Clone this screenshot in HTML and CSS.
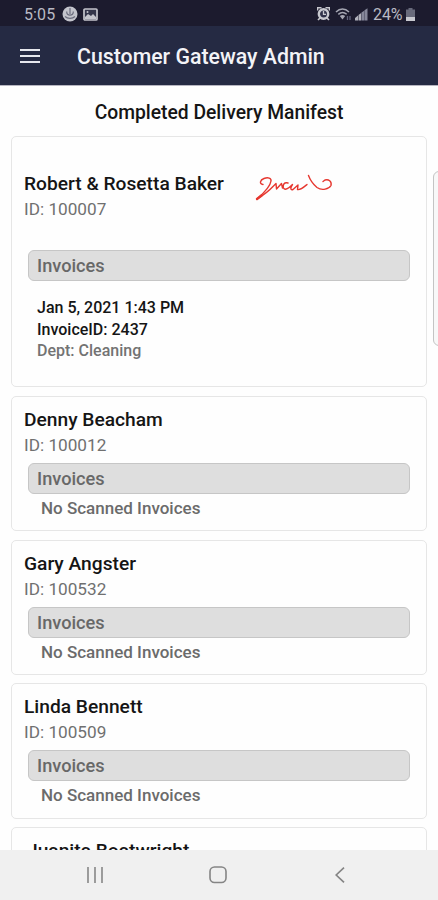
FILE: index.html
```html
<!DOCTYPE html>
<html lang="en">
<head>
<meta charset="utf-8">
<title>Customer Gateway Admin</title>
<link rel="stylesheet" href="styles.css">
</head>
<body>
<div class="status">
  <span class="clock">5:05</span>
  <svg class="st-sync" width="16" height="16" viewBox="0 0 16 16"><circle cx="8" cy="8" r="7.500" fill="#c3c4cc"/><path d="M8 2v6M4.700 5.500C4.500 8 6 9.200 8 9.200s3.500-1.200 3.300-3.700M3 10.500c2.500 2.500 7.500 2.500 10 0" fill="none" stroke="#6b6d7e" stroke-width="1.200"/></svg>
  <svg class="st-image" width="15" height="13" viewBox="0 0 15 13"><rect x="1" y="1" width="13" height="11" rx="1" fill="#33354a" stroke="#c3c4cc" stroke-width="1.700"/><path d="M2 11V9l3-3 3 2 2-2 3 3v2z" fill="#c3c4cc"/><circle cx="4.500" cy="4" r="1" fill="#c3c4cc"/></svg>
  <span class="spacer"></span>
  <svg class="st-alarm" width="13" height="14" viewBox="0 0 13 14"><path d="M.5 3.500V.7h4M12.500 3.500V.7h-4M1 13l2-2M12 13l-2-2" fill="none" stroke="#c8c9d0" stroke-width="1.700"/><circle cx="6.500" cy="7" r="4.700" fill="#30324a" stroke="#c8c9d0" stroke-width="2.400"/><path d="M6.500 4v3.300H9" fill="none" stroke="#c8c9d0" stroke-width="1.300"/></svg>
  <svg class="st-wifi" width="17" height="13" viewBox="0 0 17 13"><path d="M1 4c4-4 9-4 13 0M3.300 6.300c3-2.500 5.500-2.500 8.400 0" fill="none" stroke="#a5a6b2" stroke-width="1.500"/><path d="M4.800 8c2-1.500 3.500-1.500 5.400 0L7.500 11.500z" fill="#a5a6b2"/><path d="M12.500 8v4M15 8v4" stroke="#60627a" stroke-width="1.300"/></svg>
  <svg class="st-signal" width="13" height="13" viewBox="0 0 13 13"><path d="M0 12.500v-2.500l3-2.500v5zM3.500 12.500V7l2.700-2v7.500z" fill="#b0b1bb"/><path d="M6.500 12.500V4.500L9.200 2.800v9.700zM9.500 12.500V2.200L12.500.3v12.200z" fill="#85879a"/></svg>
  <span class="percent">24%</span>
  <svg class="st-battery" width="9" height="13" viewBox="0 0 9 13"><path d="M2.500 0h4v1.500H9V9H0V1.500h2.500z" fill="#686a7b"/><path d="M0 9h9v4H0z" fill="#c8c9d0"/></svg>
</div>
<header class="appbar">
  <svg width="20" height="14" viewBox="0 0 20 14"><path d="M0 1h20M0 7h20M0 13h20" stroke="#e6e7ed" stroke-width="1.800"/></svg>
  <h1>Customer Gateway Admin</h1>
</header>
<main class="content">
  <h2>Completed Delivery Manifest</h2>
  <section class="card card-tall">
    <div class="person">
      <div><h3>Robert &amp; Rosetta Baker</h3><p class="id">ID: 100007</p></div>
      <svg class="signature" width="80" height="30" viewBox="0 0 80 30" fill="none" stroke="#e6372f" stroke-width="1.400" stroke-linecap="round" stroke-linejoin="round"><path d="M8 13.500C4 13 5 9 9 7.500C13 6 16.500 7 16 10C15.500 14 10 21 2 28"/><path d="M2 28C7 25 12 22 18 15.500L21 12.500L21.500 18L26.500 12.500L27.500 17M33 12C29 11 27.500 14 28.500 17C30 20 34 17 37.500 13.500C35 17 35.500 19.500 38 18.500L43 14L42.500 18.500C45 19.500 49 16 52 13.500"/><path d="M2 28l4.500-3.500" stroke-width="2.400"/><path d="M53.500 4.500C55 8.500 59 14 62 16.500C67 20 74 18 76 14.500C77 10 73.500 8 70 9L68 10.500"/></svg>
    </div>
    <div class="bar">Invoices</div>
    <div class="invoice"><p>Jan 5, 2021 1:43 PM</p><p>InvoiceID: 2437</p><p class="dept">Dept: Cleaning</p></div>
  </section>
  <section class="card">
    <h3>Denny Beacham</h3><p class="id">ID: 100012</p>
    <div class="bar">Invoices</div><p class="none">No Scanned Invoices</p>
  </section>
  <section class="card">
    <h3>Gary Angster</h3><p class="id">ID: 100532</p>
    <div class="bar">Invoices</div><p class="none">No Scanned Invoices</p>
  </section>
  <section class="card">
    <h3>Linda Bennett</h3><p class="id">ID: 100509</p>
    <div class="bar">Invoices</div><p class="none">No Scanned Invoices</p>
  </section>
  <section class="card card-last">
    <h3>Juanita Boatwright</h3>
  </section>
  <div class="edge-handle"></div>
</main>
<nav class="navbar">
  <svg width="16" height="16" viewBox="0 0 16 16"><path d="M1 0v16M8 0v16M15 0v16" stroke="#8d8d8d" stroke-width="1.700"/></svg>
  <svg class="home" width="18" height="18" viewBox="0 0 18 18"><rect x="1" y="1" width="16" height="15.500" rx="4.500" fill="none" stroke="#858585" stroke-width="1.600"/></svg>
  <svg width="10" height="16" viewBox="0 0 10 16"><path d="M9 .7L1.200 8L9 15.300" fill="none" stroke="#858585" stroke-width="1.700"/></svg>
</nav>
</body>
</html>
```
FILE: styles.css
```css
* { box-sizing: border-box; }
body {
  margin: 0;
  width: 438px;
  height: 900px;
  overflow: hidden;
  display: flex;
  flex-direction: column;
  background: #fefefe;
  font-family: Roboto, "Liberation Sans", sans-serif;
  color: #151515;
}
h1, h2, h3, p { margin: 0; font-weight: 500; white-space: nowrap; }
svg { display: block; flex: none; }

.status {
  height: 26px;
  flex: none;
  display: flex;
  align-items: center;
  padding: 2px 23px 0 24px;
  background: #1c1b2e;
  color: #b9bac4;
  font-size: 16px;
}
.clock { width: 38px; letter-spacing: .1px; }
.st-image { margin-left: 5px; }
.spacer { flex: 1; }
.st-wifi { margin-left: 5px; }
.st-signal { margin-left: 3px; }
.percent { width: 31px; margin-left: 5px; margin-right: 2px; letter-spacing: -.1px; }

.appbar {
  height: 59px;
  flex: none;
  display: flex;
  align-items: center;
  gap: 37px;
  padding-left: 20px;
  background: #252a43;
  color: #f3f3f7;
}
.appbar h1 { font-size: 21.300px; line-height: 30px; margin-top: 2px; }

.content {
  position: relative;
  flex: 1;
  min-height: 0;
  overflow: hidden;
  padding: 14px 11px 0;
  border-top: 1px solid #b7b6c1;
}
h2 {
  height: 36px;
  line-height: 25px;
  font-size: 19.300px;
  text-align: center;
}
.card {
  height: 135.200px;
  margin-bottom: 8.600px;
  padding: 10px 12px 0;
  border: 1px solid #e6e6e6;
  border-radius: 5px;
}
.card-tall { height: 251.200px; padding-top: 34px; }
.card-last { padding-left: 15px; }
.person { display: flex; justify-content: space-between; }
.signature { margin: 0 79px 0 0; }
h3 { font-size: 19.200px; line-height: 26px; }
.id { font-size: 17.200px; line-height: 24px; font-weight: 400; color: #707070; }
.bar {
  height: 31px;
  margin: 6px 4px 0;
  padding-left: 8px;
  line-height: 30px;
  border: 1px solid #c6c6c6;
  border-radius: 6px;
  background: #dedede;
  color: #686868;
  font-size: 18.200px;
  font-weight: 500;
}
.card-tall .bar { margin-top: 29px; }
.none { padding-left: 17px; font-size: 17px; line-height: 29px; color: #6b6b6b; }
.invoice { padding: 16px 0 0 13px; font-size: 16px; line-height: 21.500px; }
.dept { color: #737373; }
.edge-handle {
  position: absolute;
  top: 85px;
  right: -8px;
  width: 13px;
  height: 175px;
  border: 1px solid #c4c4c4;
  border-radius: 6px;
  background: #f8f8f8;
}

.navbar {
  height: 50px;
  flex: none;
  display: flex;
  align-items: center;
  justify-content: space-between;
  padding: 0 93px 0 87px;
  background: #f0f0f0;
}
.home { margin-right: 3px; }
```
